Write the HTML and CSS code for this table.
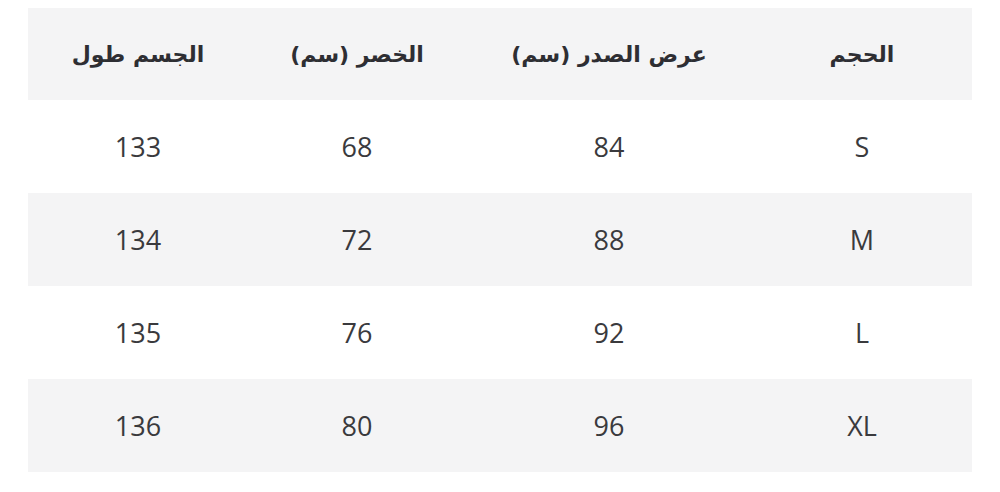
FILE: index.html
```html
<!DOCTYPE html>
<html lang="ar" dir="rtl">
<head>
<meta charset="utf-8">
<link rel="stylesheet" href="styles.css">
</head>
<body>
<div class="wrap">
<table class="size-table">
<colgroup>
<col class="c1"><col class="c2"><col class="c3"><col class="c4">
</colgroup>
<thead>
<tr><th>الحجم</th><th>عرض الصدر (سم)</th><th>الخصر (سم)</th><th>الجسم طول</th></tr>
</thead>
<tbody>
<tr><td>S</td><td>84</td><td>68</td><td>133</td></tr>
<tr><td>M</td><td>88</td><td>72</td><td>134</td></tr>
<tr><td>L</td><td>92</td><td>76</td><td>135</td></tr>
<tr><td>XL</td><td>96</td><td>80</td><td>136</td></tr>
</tbody>
</table>
</div>
</body>
</html>
```
FILE: styles.css
```css
html, body { margin: 0; padding: 0; background: #fff; }
.wrap { padding: 8px 28px 20px 28px; }
.size-table {
  width: 944px;
  border-collapse: collapse;
  table-layout: fixed;
  font-family: "Open Sans", "DejaVu Sans", sans-serif;
}
.c1 { width: 220px; }
.c2 { width: 286px; }
.c3 { width: 218px; }
.c4 { width: 220px; }
.size-table th, .size-table td {
  padding: 0;
  text-align: center;
  vertical-align: middle;
}
.size-table thead tr { background: #f4f4f5; height: 92px; }
.size-table th {
  font-family: "DejaVu Sans", "Noto Sans", sans-serif;
  font-weight: bold;
  font-size: 22px;
  color: #2e2e33;
}
.size-table tbody tr { height: 93px; }
.size-table tbody tr:nth-child(even) { background: #f4f4f5; }
.size-table td {
  font-size: 27px;
  color: #3a3a3d;
}
```
